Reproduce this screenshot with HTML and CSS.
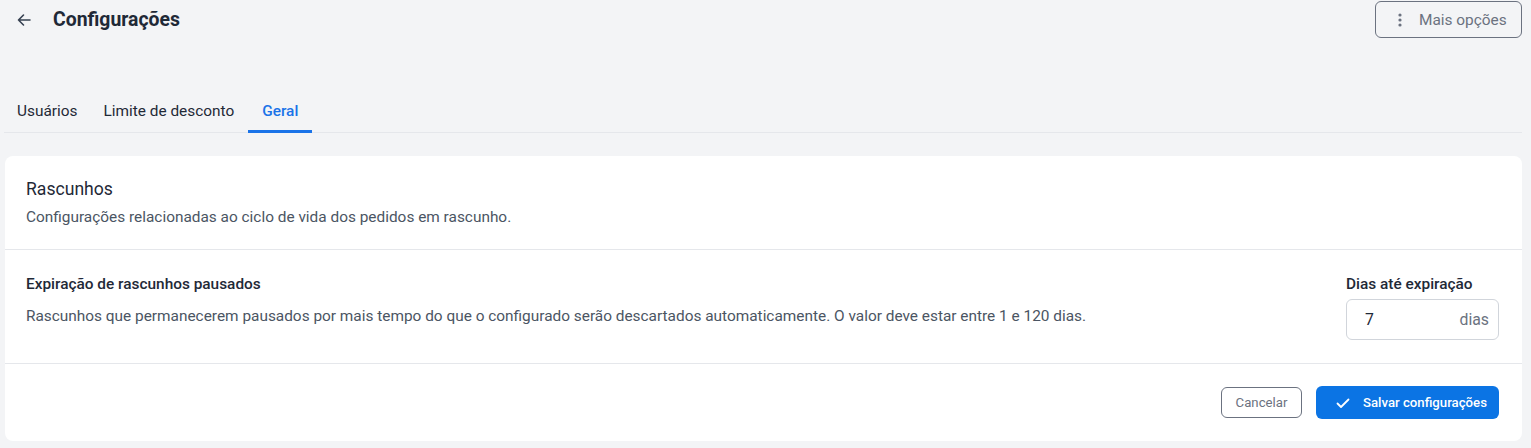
FILE: index.html
```html
<!DOCTYPE html>
<html lang="pt-BR">
<head>
<meta charset="utf-8">
<title>Configurações</title>
<link rel="stylesheet" href="styles.css">
</head>
<body>
<div class="page">
  <header class="topbar">
    <div class="title-wrap">
      <button class="back" aria-label="Voltar">
        <svg width="16" height="16" viewBox="0 0 16 16" fill="none" stroke="currentColor" stroke-width="1.6" stroke-linecap="round" stroke-linejoin="round"><path d="M14 8H2.5M7.5 3L2.5 8l5 5"/></svg>
      </button>
      <h1 class="title">Configurações</h1>
    </div>
    <button class="more-btn">
      <svg width="4" height="14" viewBox="0 0 4 14" fill="currentColor"><circle cx="2" cy="2" r="1.6"/><circle cx="2" cy="7" r="1.6"/><circle cx="2" cy="12" r="1.6"/></svg>
      <span>Mais opções</span>
    </button>
  </header>

  <nav class="tabs">
    <a class="tab">Usuários</a>
    <a class="tab">Limite de desconto</a>
    <a class="tab active">Geral</a>
  </nav>

  <section class="card">
    <div class="card-head">
      <h2 class="card-title">Rascunhos</h2>
      <p class="card-sub">Configurações relacionadas ao ciclo de vida dos pedidos em rascunho.</p>
    </div>
    <div class="setting">
      <div class="setting-text">
        <div class="setting-title">Expiração de rascunhos pausados</div>
        <p class="setting-desc">Rascunhos que permanecerem pausados por mais tempo do que o configurado serão descartados automaticamente. O valor deve estar entre 1 e 120 dias.</p>
      </div>
      <div class="field">
        <label class="field-label">Dias até expiração</label>
        <div class="input">
          <span class="input-value">7</span>
          <span class="input-suffix">dias</span>
        </div>
      </div>
    </div>
    <div class="card-foot">
      <button class="btn-cancel">Cancelar</button>
      <button class="btn-save">
        <svg width="16" height="16" viewBox="0 0 16 16" fill="none" stroke="currentColor" stroke-width="1.8" stroke-linecap="round" stroke-linejoin="round"><path d="M2.5 8.5l3.5 3.5 7.5-7.5"/></svg>
        <span>Salvar configurações</span>
      </button>
    </div>
  </section>
</div>
</body>
</html>
```

FILE: styles.css
```css
* { box-sizing: border-box; }
html, body { margin: 0; padding: 0; }
body {
  background: #f3f4f6;
  font-family: Roboto, "Liberation Sans", Arial, sans-serif;
  color: #1f2937;
  width: 1531px;
  height: 448px;
  overflow: hidden;
}
button { font-family: inherit; cursor: pointer; }
.page { padding: 0 9px 0 5px; }

.topbar {
  display: flex;
  justify-content: space-between;
  align-items: center;
  height: 38px;
  padding-top: 1px;
}
.title-wrap { display: flex; align-items: center; }
.back {
  background: none;
  border: 0;
  padding: 0;
  width: 16px;
  height: 16px;
  margin-left: 11px;
  color: #374151;
  display: flex;
}
.title {
  margin: 0 0 0 21px;
  font-size: 19.4px;
  font-weight: 700;
  color: #1f2937;
  line-height: 24px;
}
.more-btn {
  display: flex;
  align-items: center;
  gap: 17px;
  height: 37px;
  width: 147px;
  padding: 0 0 0 22px;
  background: transparent;
  border: 1px solid #6b7280;
  border-radius: 6px;
  color: #6b7280;
  font-size: 15.4px;
}

.tabs {
  display: flex;
  margin-top: 53px;
  border-bottom: 1px solid #e5e7eb;
  margin-left: -1px;
}
.tab {
  display: block;
  padding: 10px 13px 9px;
  font-size: 15.4px;
  line-height: 20px;
  color: #1f2937;
  border-bottom: 3px solid transparent;
  margin-bottom: -1px;
}
.tab.active {
  color: #1a73e8;
  font-weight: 500;
  border-bottom-color: #1a73e8;
  padding: 10px 14px 9px;
  margin-left: 1px;
}

.card {
  margin-top: 23px;
  background: #fff;
  border-radius: 8px;
}
.card-head {
  padding: 20px 23px 22px 21px;
  border-bottom: 1px solid #e5e7eb;
}
.card-title {
  margin: 0;
  font-size: 17.6px;
  font-weight: 400;
  line-height: 26px;
  color: #1f2937;
}
.card-sub {
  margin: 5px 0 0;
  font-size: 15.4px;
  line-height: 20px;
  color: #4b5563;
}
.setting {
  display: flex;
  justify-content: space-between;
  align-items: flex-start;
  padding: 24px 23px 23px 21px;
  border-bottom: 1px solid #e5e7eb;
}
.setting-title {
  font-size: 15.4px;
  font-weight: 500;
  line-height: 20px;
  color: #1f2937;
}
.setting-desc {
  margin: 12px 0 0;
  font-size: 15.4px;
  line-height: 20px;
  color: #4b5563;
}
.field { width: 153px; }
.field-label {
  display: block;
  font-size: 15.4px;
  font-weight: 500;
  line-height: 20px;
  color: #1f2937;
  white-space: nowrap;
}
.input {
  margin-top: 5px;
  height: 41px;
  border: 1px solid #d1d5db;
  border-radius: 6px;
  display: flex;
  align-items: center;
  justify-content: space-between;
  padding: 0 9px 0 18px;
  font-size: 15.8px;
}
.input-value { color: #1f2937; }
.input-suffix { color: #6b7280; }

.card-foot {
  display: flex;
  justify-content: flex-end;
  align-items: center;
  gap: 14px;
  padding: 22px 23px 22px 21px;
}
.btn-cancel {
  height: 31px;
  width: 81px;
  padding: 0;
  background: #fff;
  border: 1px solid #6b7280;
  border-radius: 6px;
  color: #6b7280;
  font-size: 13.2px;
}
.btn-save {
  height: 33px;
  width: 183px;
  display: flex;
  align-items: center;
  gap: 12px;
  padding: 0 0 0 19px;
  background: #0b74e4;
  border: 0;
  border-radius: 6px;
  color: #fff;
  font-size: 13.2px;
  font-weight: 500;
}
```
